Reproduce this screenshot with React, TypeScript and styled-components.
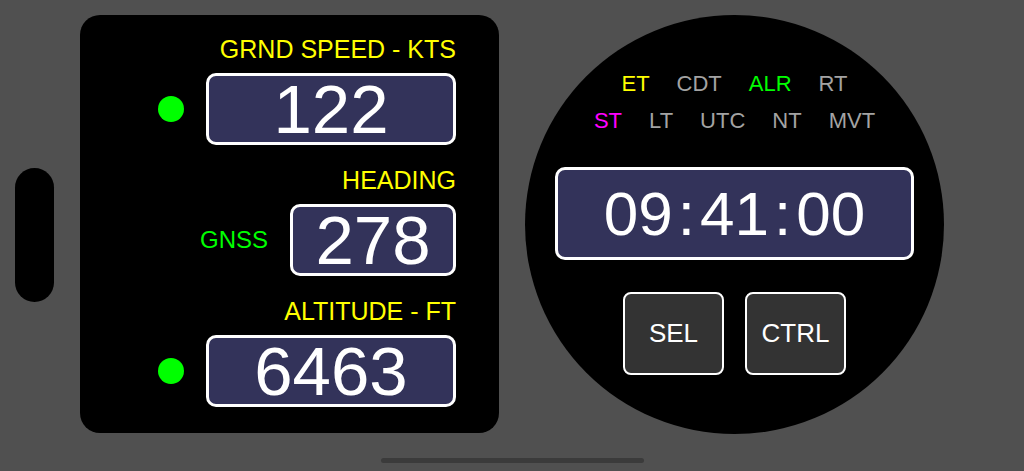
import React from 'react'
import styled, { createGlobalStyle } from 'styled-components'

const GlobalStyle = createGlobalStyle`
  html, body {
    margin: 0;
    padding: 0;
    background: #505050;
  }
  body {
    font-family: 'Liberation Sans', Arial, Helvetica, sans-serif;
  }
`

const Stage = styled.div`
  width: 1024px;
  height: 471px;
  background: #505050;
  display: flex;
  flex-direction: column;
  box-sizing: border-box;
  padding-top: 15px;
  overflow: hidden;
`

const Main = styled.div`
  display: flex;
  align-items: flex-start;
  padding-left: 15px;
  gap: 26px;
`

const SideButton = styled.div`
  width: 39px;
  height: 134px;
  margin-top: 153px;
  background: #000;
  border-radius: 20px;
`

const Panel = styled.div`
  width: 419px;
  height: 418px;
  background: #000;
  border-radius: 20px;
  box-sizing: border-box;
  padding: 22px 43px 0 0;
  display: flex;
  flex-direction: column;
  align-items: flex-end;
  gap: 23px;
`

const Group = styled.div`
  display: flex;
  flex-direction: column;
  align-items: flex-end;
  gap: 11px;
`

const Label = styled.div`
  color: #ffff00;
  font-size: 25px;
  line-height: 25px;
  white-space: nowrap;
`

const ValueRow = styled.div`
  display: flex;
  align-items: center;
  justify-content: flex-end;
  gap: 22px;
`

const Dot = styled.div`
  width: 26px;
  height: 26px;
  border-radius: 50%;
  background: #00ff00;
`

const Source = styled.div`
  color: #00ff00;
  font-size: 24px;
  line-height: 24px;
`

const ValueBox = styled.div<{ $w: number; $h?: number; $size?: number }>`
  width: ${p => p.$w}px;
  height: ${p => p.$h ?? 72}px;
  box-sizing: border-box;
  border: 3px solid #fff;
  border-radius: 10px;
  background: #33335a;
  color: #fff;
  font-size: ${p => p.$size ?? 69}px;
  line-height: 1;
  display: flex;
  align-items: center;
  justify-content: center;
  white-space: nowrap;
`

const Dial = styled.div`
  width: 419px;
  height: 419px;
  border-radius: 50%;
  background: #000;
  box-sizing: border-box;
  padding-top: 58px;
  display: flex;
  flex-direction: column;
  align-items: center;
`

const ModeRow = styled.div`
  display: flex;
  justify-content: center;
  gap: 27px;
  font-size: 22px;
  line-height: 22px;
  & + & {
    margin-top: 15px;
  }
`

const Mode = styled.span<{ $color?: string }>`
  color: ${p => p.$color ?? '#a3a3a3'};
`

const TimeWrap = styled.div`
  margin-top: 35px;
`

const Colon = styled.span`
  padding: 0 5px;
`

const Buttons = styled.div`
  display: flex;
  gap: 21px;
  margin-top: 32px;
`

const Key = styled.button`
  width: 101px;
  height: 83px;
  box-sizing: border-box;
  border: 2.5px solid #fff;
  border-radius: 8px;
  background: #333333;
  color: #fff;
  font-family: 'Liberation Sans', Arial, Helvetica, sans-serif;
  font-size: 26px;
  padding: 0;
  cursor: pointer;
`

const HomeBar = styled.div`
  align-self: center;
  width: 263px;
  height: 5px;
  border-radius: 3px;
  background: #3b3b3b;
  margin-top: 24px;
`

const readouts = [
  { label: 'GRND SPEED - KTS', value: '122', width: 250, side: 'dot' },
  { label: 'HEADING', value: '278', width: 166, side: 'GNSS' },
  { label: 'ALTITUDE - FT', value: '6463', width: 250, side: 'dot' },
]

const App: React.FC = () => {
  return (
    <Stage>
      <GlobalStyle />
      <Main>
        <SideButton />
        <Panel>
          {readouts.map(r => (
            <Group key={r.label}>
              <Label>{r.label}</Label>
              <ValueRow>
                {r.side === 'dot' ? <Dot /> : <Source>{r.side}</Source>}
                <ValueBox $w={r.width}>{r.value}</ValueBox>
              </ValueRow>
            </Group>
          ))}
        </Panel>
        <Dial>
          <ModeRow>
            <Mode $color="#ffff00">ET</Mode>
            <Mode>CDT</Mode>
            <Mode $color="#00ff00">ALR</Mode>
            <Mode>RT</Mode>
          </ModeRow>
          <ModeRow>
            <Mode $color="#ff00ff">ST</Mode>
            <Mode>LT</Mode>
            <Mode>UTC</Mode>
            <Mode>NT</Mode>
            <Mode>MVT</Mode>
          </ModeRow>
          <TimeWrap>
            <ValueBox $w={359} $h={93} $size={62}>
              09<Colon>:</Colon>41<Colon>:</Colon>00
            </ValueBox>
          </TimeWrap>
          <Buttons>
            <Key>SEL</Key>
            <Key>CTRL</Key>
          </Buttons>
        </Dial>
      </Main>
      <HomeBar />
    </Stage>
  )
}

export default App
